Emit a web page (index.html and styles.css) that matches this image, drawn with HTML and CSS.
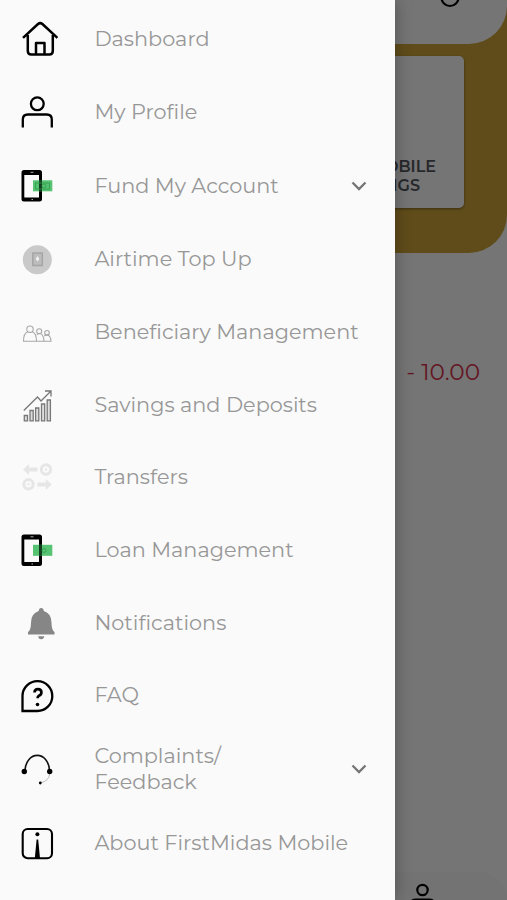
FILE: index.html
```html
<!DOCTYPE html>
<html lang="en">
<head>
<meta charset="UTF-8" />
<meta name="viewport" content="width=device-width, initial-scale=1.0"/>
<title>FirstMidas Mobile</title>
<link rel="stylesheet" href="styles.css">
</head>
<body>
<!-- account page under the drawer -->
<main class="page">
  <section class="hero">
    <header class="topbar">
      <svg class="top-icon" width="24" height="24" viewBox="0 0 24 24"><circle cx="12" cy="13.500" r="8.500"/></svg>
    </header>
    <div class="card">
      <div>MOBILE</div>
      <div class="card-second">SAVINGS</div>
    </div>
  </section>
  <div class="amount">- 10.00</div>
  <nav class="bottom-nav">
    <svg class="nav-icon" width="26" height="26" viewBox="0 0 26 26"><circle cx="13.500" cy="8" r="5.200"/><path d="M2.500 26v-5q0-3.500 3.500-3.500h15q3.500 0 3.500 3.500v5"/></svg>
  </nav>
</main>
<div class="scrim"></div>

<aside class="drawer">
  <a class="item">
    <svg class="icon" viewBox="0 0 40 40"><g class="line home"><path d="M3 18.800 18 5q2.200-1.800 4.400 0l15 13.800M7.800 16v16q0 3.500 3.500 3.500h18q3.500 0 3.500-3.500V16"/><path d="M16 35V24h8.500v11"/></g></svg>
    <span class="label">Dashboard</span>
  </a>
  <a class="item">
    <svg class="icon" viewBox="0 0 40 40"><g class="line"><circle cx="17.300" cy="11.800" r="6.400"/><path d="M2.800 35.500v-8q0-5 5-5h19q5 0 5 5v8"/></g></svg>
    <span class="label">My Profile</span>
  </a>
  <a class="item expandable">
    <svg class="icon" viewBox="0 0 40 40"><path fill-rule="evenodd" d="M4 4h15.500q2.500 0 2.500 2.500V33q0 2.500-2.500 2.500H4q-2.500 0-2.500-2.500V6.500Q1.500 4 4 4zM4.300 9v22.500h14.700V9z"/><path class="money" d="M13 14.300h19.300v11H13z"/><path class="money-dark" d="M19 14.300h3v11h-3z"/><path class="money-line" d="M15.500 17h14v6h-14z"/><circle class="money-line" cx="24" cy="20" r="2"/><path class="phone-mark" d="M10.500 6.300h3M11.500 33.500h1.500"/></svg>
    <span class="label">Fund My Account</span>
    <svg class="chevron" viewBox="0 0 16 10"><path d="M1.500 1.500 8 8l6.500-6.500"/></svg>
  </a>
  <a class="item">
    <svg class="icon" viewBox="0 0 40 40"><circle cx="17.300" cy="20.700" r="14.500" fill="#c9c9c9"/><path class="airtime" d="M12.800 14h9.500v12.500h-9.500z"/><path d="m15.800 20 1.800-3 1.600 3-1.600 2.500z" fill="#f3f3f3"/></svg>
    <span class="label">Airtime Top Up</span>
  </a>
  <a class="item">
    <svg class="icon" viewBox="0 0 40 40"><g class="people"><circle cx="10" cy="17.200" r="3.200"/><path d="M7.800 19.700q-4.300 1.500-4.300 9.500h13q0-8-4.300-9.500"/><circle cx="19.200" cy="19.200" r="2.500"/><path d="M16.800 22.500q3.800-2.500 5.800 1 1.500 2.500 1.400 5.700h-7.500"/><circle cx="27" cy="20.800" r="2.300"/><path d="M24.300 24q3.400-2.500 5.400.5 1.300 2 1.300 4.700h-7"/></g></svg>
    <span class="label">Beneficiary Management</span>
  </a>
  <a class="item">
    <svg class="icon" viewBox="0 0 40 40"><g class="chart"><path d="M3.800 25.500 17.500 12l3.500 4L30.500 6.500M25 6h6v5.500"/><path d="M4.300 30.500h3.200v5.300H4.300zM10 25.500h3.200v10.300H10zM15.600 23h3.200v12.800h-3.200zM21.500 19h3.200v16.800h-3.200zM27.200 15h3.200v20.800h-3.200z"/></g></svg>
    <span class="label">Savings and Deposits</span>
  </a>
  <a class="item">
    <svg class="icon" viewBox="0 0 40 40"><g fill="#e6e6e6"><path d="m3 12.500 6-5.500v3.500h8.500v4H9V18zM31.800 27.500l-6-5.500v3.500h-8.500v4h8.500V33z"/></g><g class="coin"><circle cx="26" cy="12.500" r="4.700"/><circle cx="8.500" cy="27.300" r="4.700"/></g><path d="M25 11.500h2v2h-2zM7.500 26.300h2v2h-2z" fill="#e4e4e4"/></svg>
    <span class="label">Transfers</span>
  </a>
  <a class="item">
    <svg class="icon" viewBox="0 0 40 40"><path fill-rule="evenodd" d="M4 4.500h15.500q2.500 0 2.500 2.500v26.500q0 2.500-2.500 2.500H4q-2.500 0-2.500-2.500V7Q1.500 4.500 4 4.500zM4.300 9.500v22.500h14.700V9.500z"/><path class="money" d="M13 14.800h19.300v11H13z"/><path class="money-dark" d="M19 14.800h3v11h-3z"/><circle class="money-line" cx="24" cy="20.500" r="2"/><path class="phone-mark" d="M10.500 6.800h3M11.500 34h1.500"/></svg>
    <span class="label">Loan Management</span>
  </a>
  <a class="item">
    <svg class="icon" viewBox="0 0 40 40"><path d="M21.200 5q2.300 0 2.600 3 7.700 2.500 7.700 11.500 0 7.500 3 9.500v2.500H8V29q3-2 3-9.500 0-9 7.700-11.500.3-3 2.500-3zM18.200 33.200h6q-.3 3-3 3t-3-3z" fill="#868686"/></svg>
    <span class="label">Notifications</span>
  </a>
  <a class="item">
    <svg class="icon" viewBox="0 0 40 40"><g class="line"><path class="bubble" d="M2.500 36V20.800a14.900 14.900 0 1 1 14.900 15.200z"/><path class="question" d="M14.500 17.500q.2-3.300 3.400-3.300 3.500 0 3.500 3.200 0 2.300-2.500 3.300-1.300.6-1.300 2.500"/></g><circle cx="17.500" cy="29.500" r="1.800"/></svg>
    <span class="label">FAQ</span>
  </a>
  <a class="item expandable">
    <svg class="icon" viewBox="0 0 40 40"><g class="headset"><path d="M4.800 22.500C5.800 1 28.800 1 29.700 22.500"/><path class="thin" d="M30 23.500q-1 9-9.500 10.300"/></g><circle cx="4.300" cy="22.500" r="2.700"/><circle cx="29.700" cy="22.500" r="2.700"/><circle cx="20.300" cy="34" r="1.400"/></svg>
    <span class="label">Complaints/<br>Feedback</span>
    <svg class="chevron" viewBox="0 0 16 10"><path d="M1.500 1.500 8 8l6.500-6.500"/></svg>
  </a>
  <a class="item">
    <svg class="icon" viewBox="0 0 40 40"><rect class="box" x="2.700" y="6" width="29.300" height="29.300" rx="5"/><circle cx="17.400" cy="11.300" r="2"/><path d="M16.600 16.500h1.600L20 35.500h-5.200z"/></svg>
    <span class="label">About FirstMidas Mobile</span>
  </a>
</aside>
</body>
</html>
```

FILE: styles.css
```css
* {
  box-sizing: border-box;
}
body {
  margin: 0;
  height: 900px;
  overflow: hidden;
  position: relative;
  background: #fff;
  font-family: Montserrat, Inter, sans-serif;
  font-variant-ligatures: none;
}
.page {
  height: 900px;
  display: flex;
  flex-direction: column;
}
.hero {
  height: 253px;
  background: #d1a739;
  border-radius: 0 0 38px 38px;
}
.topbar {
  height: 44px;
  background: #fff;
  border-radius: 0 0 38px 38px;
  display: flex;
  justify-content: flex-end;
  padding-right: 45px;
}
.top-icon {
  margin-top: -16px;
  fill: none;
  stroke: #000;
  stroke-width: 2.2;
}
.card {
  width: 152px;
  height: 152px;
  margin: 12px 43px 0 auto;
  padding: 101px 28px 0 0;
  border-radius: 5px;
  background: #fff;
  box-shadow: 0 1px 3px rgba(0, 0, 0, 0.4);
  color: #55585f;
  font-size: 16px;
  font-weight: 600;
  line-height: 19px;
  text-align: right;
}
.card-second {
  padding-right: 16px;
}
.amount {
  margin: 104px 27px 0 auto;
  color: #d8344e;
  font-size: 23.2px;
  line-height: 30px;
}
.bottom-nav {
  height: 28px;
  margin-top: auto;
  padding: 10px 0 0 409px;
  background: #fafafa;
  border-radius: 0 38px 0 0;
}
.nav-icon {
  fill: none;
  stroke: #000;
  stroke-width: 2.2;
}
/* overlay and drawer sit on top of the page */
.scrim {
  position: absolute;
  inset: 0;
  background: rgba(0, 0, 0, 0.54);
}
.drawer {
  position: absolute;
  top: 0;
  left: 0;
  width: 395px;
  height: 900px;
  padding: 2.9px 28px 0 20px;
  background: #fafafa;
  box-shadow: 0 0 16px rgba(0, 0, 0, 0.3);
}
.item {
  display: flex;
  align-items: center;
  height: 72.65px;
  color: #979797;
  font-size: 20.8px;
  line-height: 26px;
}
.expandable {
  height: 75px;
}
.icon {
  flex: none;
  width: 40px;
  height: 40px;
  margin-right: 34.4px;
}
.label {
  white-space: nowrap;
}
.chevron {
  width: 16px;
  height: 10px;
  margin-left: auto;
  fill: none;
  stroke: #757575;
  stroke-width: 2.3;
}
.line {
  fill: none;
  stroke: #000;
  stroke-width: 2.3;
  stroke-linejoin: round;
}
.home {
  stroke-width: 2.5;
}
.bubble {
  stroke-linejoin: miter;
}
.question {
  stroke-width: 2.7;
}
.box {
  fill: none;
  stroke: #000;
  stroke-width: 2.1;
}
.money {
  fill: #43bd62;
  fill-opacity: 0.9;
}
.money-dark {
  fill: #123d1e;
}
.money-line {
  fill: none;
  stroke: #319b4c;
  stroke-width: 0.8;
}
.phone-mark {
  stroke: #aaa;
}
.airtime {
  fill: #bdbdbd;
  stroke: #a5a5a5;
  stroke-width: 1.5;
}
.people {
  fill: none;
  stroke: #a8a8a8;
  stroke-width: 1.1;
}
.chart {
  fill: #ddd;
  stroke: #777;
  stroke-width: 1.3;
}
.chart path:first-child {
  fill: none;
}
.coin {
  fill: none;
  stroke: #e6e6e6;
  stroke-width: 3;
}
.headset {
  fill: none;
  stroke: #111;
  stroke-width: 1.6;
}
.thin {
  stroke: #aaa;
  stroke-width: 0.8;
}
```
